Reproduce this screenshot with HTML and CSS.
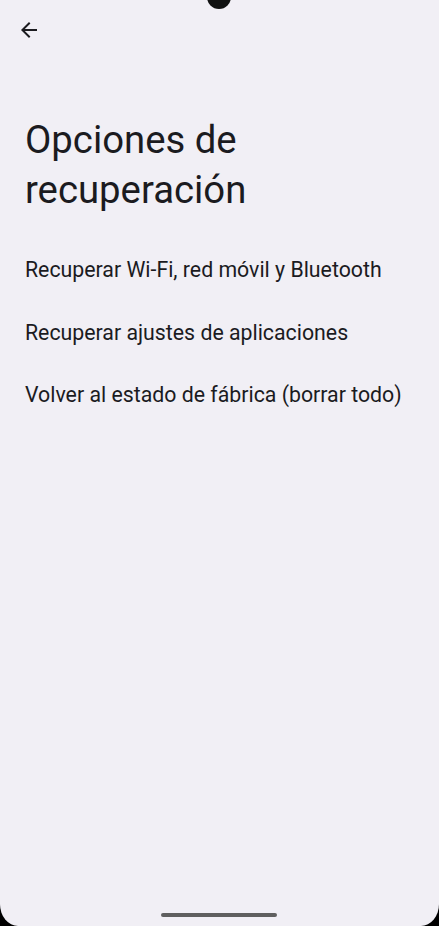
FILE: index.html
```html
<!DOCTYPE html>
<html lang="es">
<head>
<meta charset="utf-8">
<title>Opciones de recuperación</title>
<link rel="stylesheet" href="styles.css">
</head>
<body>
<div class="screen">
  <div class="camera"></div>
  <header class="topbar">
    <button class="back" aria-label="Atrás">
      <svg width="24" height="24" viewBox="0 0 24 24"><path d="M20 11H7.83l5.59-5.59L12 4l-8 8 8 8 1.41-1.41L7.83 13H20v-2z" fill="#1b1b1f"/></svg>
    </button>
  </header>
  <h1 class="title">Opciones de recuperación</h1>
  <ul class="options">
    <li class="option">Recuperar Wi-Fi, red móvil y Bluetooth</li>
    <li class="option">Recuperar ajustes de aplicaciones</li>
    <li class="option">Volver al estado de fábrica (borrar todo)</li>
  </ul>
  <div class="home-indicator"></div>
</div>
</body>
</html>
```
FILE: styles.css
```css
html, body {
  margin: 0;
  padding: 0;
  background: #000;
}
.screen {
  position: relative;
  width: 439px;
  height: 926px;
  background: #f1eff5;
  border-bottom-left-radius: 18px 22px;
  border-bottom-right-radius: 18px 22px;
  overflow: hidden;
  font-family: Roboto, "Noto Sans", sans-serif;
  color: #1b1b1f;
}
.camera {
  position: absolute;
  left: 207px;
  top: -15px;
  width: 24px;
  height: 24px;
  border-radius: 50%;
  background: #111;
}
.topbar {
  height: 60px;
  padding: 18px 0 0 17px;
  box-sizing: border-box;
}
.back {
  display: block;
  width: 24px;
  height: 24px;
  padding: 0;
  border: 0;
  background: none;
}
.back svg { display: block; }
.title {
  margin: 55px 0 0 25px;
  font-size: 38.3px;
  font-weight: 400;
  line-height: 50px;
  width: 320px;
}
.options {
  list-style: none;
  margin: 24px 0 0;
  padding: 0;
}
.option {
  padding: 19px 25px;
  font-size: 21.3px;
  line-height: 24.5px;
  white-space: nowrap;
}
.home-indicator {
  position: absolute;
  left: 161px;
  top: 913px;
  width: 116px;
  height: 4px;
  border-radius: 2px;
  background: #5f5f5f;
}
```
